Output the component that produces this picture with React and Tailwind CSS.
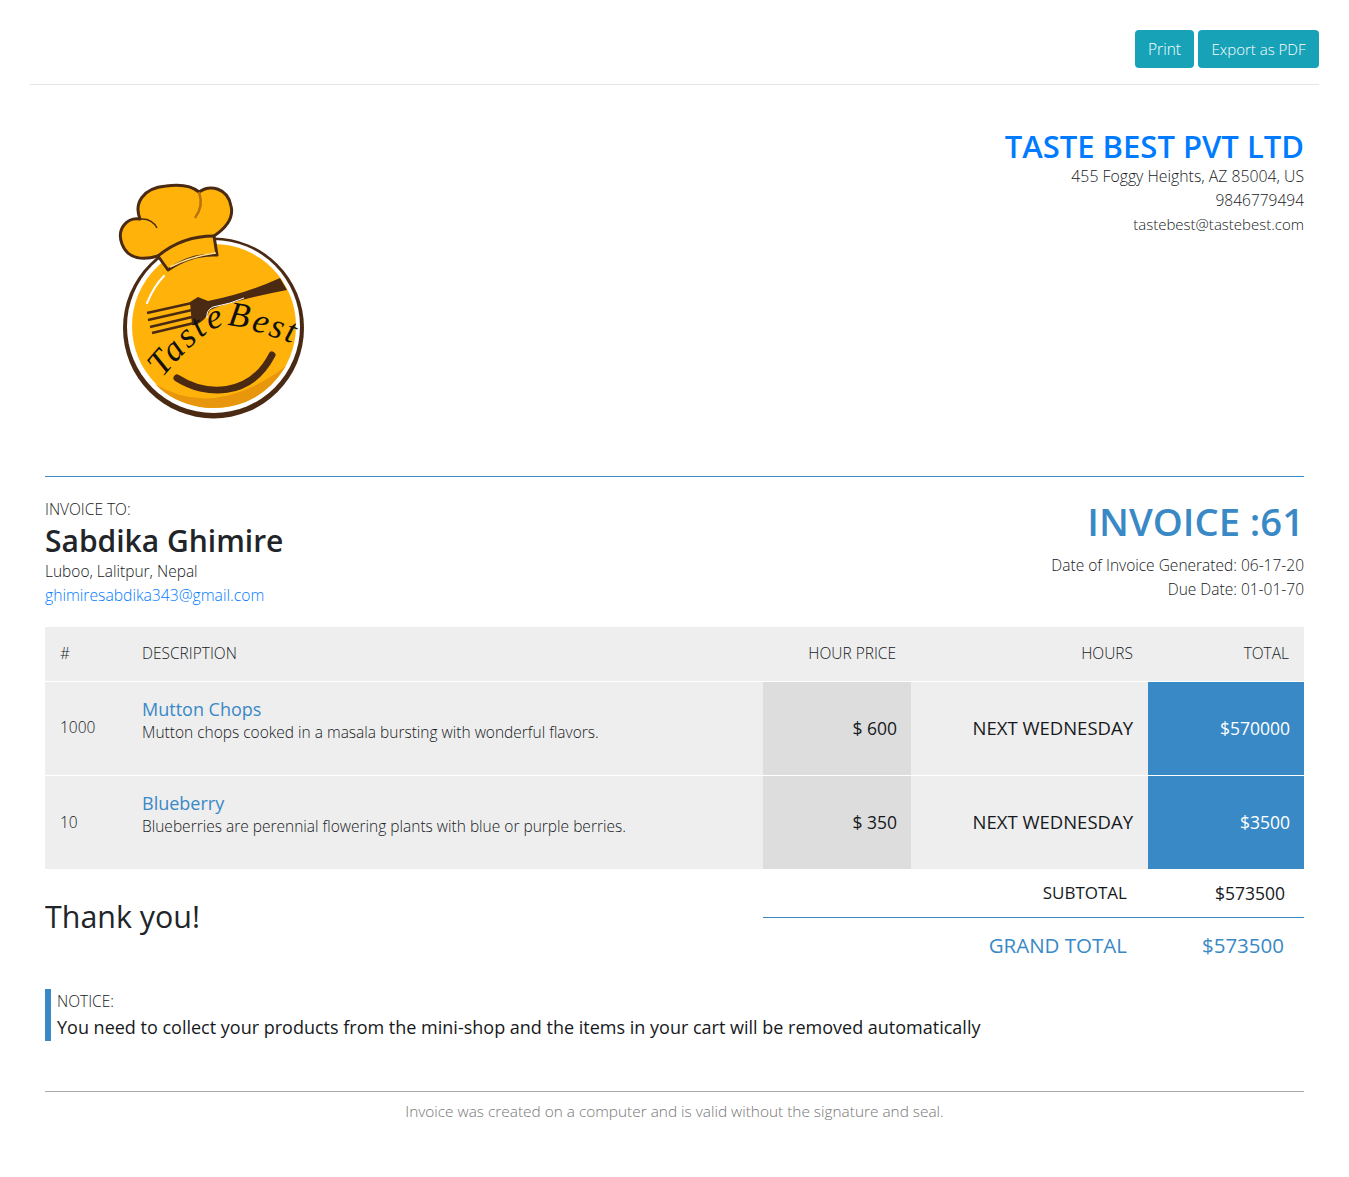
const font = { fontFamily: '"Open Sans", sans-serif' };

const items = [
  { id: '1000', name: 'Mutton Chops', desc: 'Mutton chops cooked in a masala bursting with wonderful flavors.', price: '$ 600', hours: 'NEXT WEDNESDAY', total: '$570000' },
  { id: '10', name: 'Blueberry', desc: 'Blueberries are perennial flowering plants with blue or purple berries.', price: '$ 350', hours: 'NEXT WEDNESDAY', total: '$3500' },
];

const Logo = () => (
  <svg width="220" height="260" viewBox="0 0 220 260" className="block">
    {/* plate */}
    <circle cx="113.500" cy="158" r="90.500" fill="#4a2a12" />
    <circle cx="113.500" cy="156.500" r="86.500" fill="#fff" />
    <circle cx="114" cy="156" r="82" fill="#ffb30a" />
    <path d="M55 214 Q115 250 186 196 Q156 244 100 237 Q72 232 55 214Z" fill="#e8960c" />
    <path d="M47 133 Q54 116 64 106" fill="none" stroke="#fff" strokeWidth="2" strokeLinecap="round" />
    {/* hat */}
    <path d="M68 100 L58 86 C44 90 28 90 22 74 C16 58 28 47 40 49 C34 34 42 18 66 16 C80 14 92 16 99 22 C110 14 128 18 131 36 C134 48 126 58 114 66 L117 85 C98 84 82 90 68 100Z" fill="#ffb30a" stroke="#4a2a12" strokeWidth="3" strokeLinejoin="round" />
    <path d="M58 86 Q82 66 114 66" fill="none" stroke="#4a2a12" strokeWidth="3" />
    <path d="M99 22 Q104 36 95 48" fill="none" stroke="#b8740c" strokeWidth="2.500" />
    <path d="M40 49 Q52 48 57 58" fill="none" stroke="#4a2a12" strokeWidth="1.500" />
    <path d="M70 97 Q92 86 116 83" fill="none" stroke="#ffe08a" strokeWidth="1.500" />
    {/* fork */}
    <path d="M108 131 Q145 124 180 108 L187 120 Q150 127 120 136 L110 140 Q106 150 96 155 L92 155 L90 132 L98 127Z" fill="#4a2a12" />
    <path d="M47 143 L92 133 M48 150 L92 140 M50 157 L92 147 M52 163 L94 153" stroke="#4a2a12" strokeWidth="2.500" fill="none" />
    <path d="M107 148 Q106 140 113 137 Q130 134 144 128" fill="none" stroke="#fff" strokeWidth="1" />
    {/* lettering */}
    <path id="logo-arc" d="M62 208 Q92 172 112 160 Q125 153 145 158 L198 175" fill="none" />
    <text fontFamily='"Liberation Serif", serif' fontStyle="italic" fontSize="35" letterSpacing="2.500" fill="#111">
      <textPath href="#logo-arc">TasteBest</textPath>
    </text>
    <path d="M77 208 C105 226 150 228 172 185" fill="none" stroke="#4a2a12" strokeWidth="7" strokeLinecap="round" />
  </svg>
);

export default function App() {
  return (
    <div className="bg-white p-[30px] pb-[53px] text-[#16191c] font-light text-[15.500px]" style={font}>
      <div className="flex justify-end gap-1 pb-4 border-b border-[#e5e5e5]">
        <button className="h-[38px] w-[59px] pt-px bg-[#17a2b8] text-white rounded">Print</button>
        <button className="h-[38px] w-[121px] pt-px bg-[#17a2b8] text-white text-[15px] rounded">Export as PDF</button>
      </div>

      <div className="px-[15px]">
        <div className="flex justify-between pt-[44px] pb-[46px] border-b border-[#3989c6]">
          <div className="pl-[55px] pt-[41px]"><Logo /></div>
          <div className="text-right leading-6">
            <h2 className="text-[31px] leading-[34px] mb-px font-semibold text-[#007bff]">TASTE BEST PVT LTD</h2>
            <div className="text-[15.800px]">455 Foggy Heights, AZ 85004, US</div>
            <div>9846779494</div>
            <div className="text-[15px]">tastebest@tastebest.com</div>
          </div>
        </div>

        <div className="flex justify-between pt-[20px] pb-[20px] leading-6">
          <div>
            <div>INVOICE TO:</div>
            <h2 className="text-[30px] leading-[40px] -mb-[2px] font-semibold text-[#212529]">Sabdika Ghimire</h2>
            <div>Luboo, Lalitpur, Nepal</div>
            <div className="text-[15.700px] text-[#007bff]">ghimiresabdika343@gmail.com</div>
          </div>
          <div className="text-right">
            <h1 className="text-[38.200px] leading-[48px] mb-[8px] font-semibold text-[#3989c6]">INVOICE :61</h1>
            <div>Date of Invoice Generated: 06-17-20</div>
            <div>Due Date: 01-01-70</div>
          </div>
        </div>

        <table className="w-full border-collapse">
          <thead>
            <tr className="h-[54px] bg-[#eee] border-b border-white text-left">
              <th className="w-[97px] pl-[15px] font-light">#</th>
              <th className="font-light">DESCRIPTION</th>
              <th className="w-[148px] pr-[15px] text-right font-light">HOUR PRICE</th>
              <th className="w-[237px] pr-[15px] text-right font-light">HOURS</th>
              <th className="w-[156px] pr-[15px] text-right font-light">TOTAL</th>
            </tr>
          </thead>
          <tbody>
            {items.map((it, i) => (
              <tr key={it.name} className={`h-[94px] ${i === 0 ? 'border-b border-white' : ''} bg-[#eee]`}>
                <td className="pl-[15px]">{it.id}</td>
                <td className="pb-[14px]">
                  <h3 className="text-[18px] leading-[22px] text-[#3989c6] font-normal">{it.name}</h3>
                  <div className="leading-6">{it.desc}</div>
                </td>
                <td className="bg-[#ddd] pr-[14px] text-right text-[17.500px] font-normal">{it.price}</td>
                <td className="pr-[15px] text-right text-[18.500px] font-normal">{it.hours}</td>
                <td className="bg-[#3989c6] text-white pr-[14px] text-right text-[17.500px] font-normal">{it.total}</td>
              </tr>
            ))}
          </tbody>
        </table>

        <div className="flex justify-between">
          <div className="pt-[27px] text-[30.400px] leading-[42px] font-normal text-[#212529]">Thank you!</div>
          <div className="w-[541px] text-[17px] font-normal">
            <div className="flex h-[49px] items-center justify-end border-b border-[#3989c6]">
              <span>SUBTOTAL</span>
              <span className="w-[177px] pr-[19px] text-right text-[17.500px]">$573500</span>
            </div>
            <div className="flex h-[55px] items-center justify-end text-[#3989c6] text-[20.500px]">
              <span>GRAND TOTAL</span>
              <span className="w-[177px] pr-5 text-right">$573500</span>
            </div>
          </div>
        </div>

        <div className="mt-[16px] pl-[6px] border-l-[6px] border-[#3989c6]">
          <div className="leading-6">NOTICE:</div>
          <div className="text-[18px] leading-[28px] font-normal">You need to collect your products from the mini-shop and the items in your cart will be removed automatically</div>
        </div>

        <div className="mt-[50px] pt-2 border-t border-[#aaa] text-center text-[#777] text-[15.400px] leading-6">
          Invoice was created on a computer and is valid without the signature and seal.
        </div>
      </div>
    </div>
  );
}
